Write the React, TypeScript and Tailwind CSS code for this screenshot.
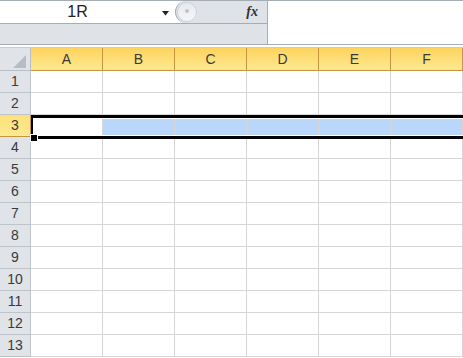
import React from "react";

const cols = ["A", "B", "C", "D", "E", "F"];
const rows = Array.from({ length: 13 }, (_, i) => i + 1);

const font = { fontFamily: '"Liberation Sans", Arial, sans-serif' };

const FormulaBar = () => (
  <div className="flex h-[45px] border-t border-b border-[#a7adb5] bg-white">
    <div className="flex w-[268px] flex-col border-r border-[#a7adb5]">
      <div className="flex h-[23px] border-b border-[#a7adb5] bg-white">
        <div className="relative flex w-[175px] items-center">
          <span className="w-[155px] text-center text-[16px] leading-none text-[#222]">1R</span>
          <svg
            className="absolute left-[162px] top-[10px]"
            width="7"
            height="5"
            viewBox="0 0 7 5"
          >
            <polygon points="0,0 7,0 3.5,4.5" fill="#222" />
          </svg>
        </div>
        <div className="relative flex flex-1 items-center justify-end rounded-l-[12px] border-l border-[#a3a9b1] bg-[#dfe3e8] pr-[9px]">
          <div className="absolute left-[1px] top-[1px] h-[20px] w-[20px] rounded-full border border-[#cfd3d9] bg-gradient-to-b from-[#e6e9ed] to-[#f5f6f8]">
            <div className="absolute left-[7px] top-[6px] h-[4px] w-[4px] rounded-full bg-[#bfc3c9]" />
          </div>
          <span
            className="text-[14px] font-bold italic leading-none text-[#333]"
            style={{ fontFamily: '"Liberation Serif", "Times New Roman", serif' }}
          >
            fx
          </span>
        </div>
      </div>
      <div className="flex-1 bg-[#dfe3e8]" />
    </div>
    <div className="flex-1 bg-white" />
  </div>
);

const Sheet = () => (
  <div className="relative mt-[2px] grid grid-cols-[31px_repeat(6,72px)] border-t border-[#c9ccd1]">
    {/* corner */}
    <div className="relative h-[23px] border-b border-r border-[#b9bec5] bg-[#e0e3e8]">
      <svg className="absolute left-[13px] top-[7px]" width="13" height="13" viewBox="0 0 13 13">
        <polygon points="13,0 13,13 0,13" fill="#b9bdc3" />
      </svg>
    </div>
    {cols.map((c, i) => (
      <div
        key={c}
        className={`flex h-[23px] items-center justify-center border-b border-r border-[#c4973f] bg-gradient-to-b from-[#fcd35c] to-[#fee98f] text-[14px] text-[#3a3a3a] ${
          i === 0 ? "border-l -ml-px" : ""
        }`}
      >
        {c}
      </div>
    ))}

    {rows.map((r) => (
      <React.Fragment key={r}>
        <div
          className={`flex h-[22px] items-center justify-center border-b border-r text-[14px] text-[#3a3a3a] ${
            r === 3
              ? "border-[#c4973f] bg-gradient-to-b from-[#fde07a] to-[#fee98f]"
              : "border-[#bfc4cb] bg-[#e0e3e8]"
          }`}
        >
          {r}
        </div>
        {cols.map((c, i) => (
          <div
            key={c}
            className={`h-[22px] border-b border-r border-[#d6d6d6] ${
              r === 3 && i > 0 ? "bg-[#b9d7fb]" : "bg-white"
            }`}
          />
        ))}
      </React.Fragment>
    ))}

    {/* selection around row 3 */}
    <div className="pointer-events-none absolute left-[31px] right-[-6px] top-[67px] h-[24px] border-b-[3px] border-l-2 border-t-[3px] border-black shadow-[inset_0_0_0_1px_#ffffff]" />
    {/* fill handle */}
    <div className="pointer-events-none absolute left-[30px] top-[86px] h-[8px] w-[8px] border border-white bg-black" />
  </div>
);

export default function App() {
  return (
    <div className="h-[358px] w-[463px] overflow-hidden bg-white" style={font}>
      <FormulaBar />
      <Sheet />
    </div>
  );
}
